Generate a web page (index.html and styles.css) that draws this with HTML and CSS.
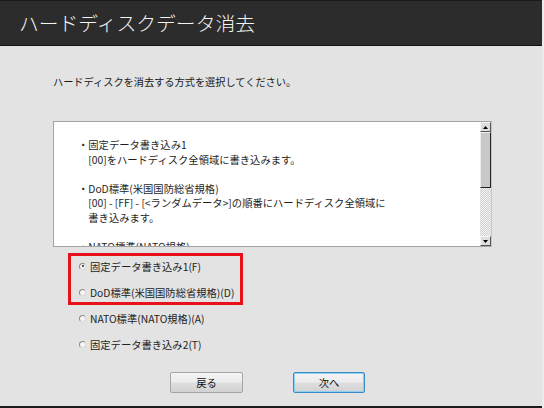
FILE: index.html
```html
<!DOCTYPE html>
<html lang="ja">
<head>
<meta charset="utf-8">
<title>ハードディスクデータ消去</title>
<link rel="stylesheet" href="styles.css">
</head>
<body>
<div class="window">
  <header class="titlebar"><h1 class="title">ハードディスクデータ消去</h1></header>
  <main class="content">
    <p class="lead">ハードディスクを消去する方式を選択してください。</p>
    <div class="listbox">
      <div class="listtext">
        <p class="item">・固定データ書き込み1<br>[00]をハードディスク全領域に書き込みます。</p>
        <p class="item">・DoD標準(米国国防総省規格)<br>[00] - [FF] - [&lt;ランダムデータ&gt;]の順番にハードディスク全領域に<br>書き込みます。</p>
        <p class="item">・NATO標準(NATO規格)</p>
      </div>
      <div class="scrollbar">
        <div class="sb-btn"><svg width="5" height="3" viewBox="0 0 5 3"><path d="M2.5 0L5 3H0z" fill="#000"/></svg></div>
        <div class="sb-thumb"></div>
        <div class="sb-track"></div>
        <div class="sb-btn"><svg width="5" height="3" viewBox="0 0 5 3"><path d="M0 0H5L2.5 3z" fill="#000"/></svg></div>
      </div>
    </div>
    <div class="options">
      <div class="highlight">
        <label class="opt"><span class="radio checked"></span>固定データ書き込み1(F)</label>
        <label class="opt"><span class="radio"></span>DoD標準(米国国防総省規格)(D)</label>
      </div>
      <label class="opt"><span class="radio"></span>NATO標準(NATO規格)(A)</label>
      <label class="opt"><span class="radio"></span>固定データ書き込み2(T)</label>
    </div>
    <div class="buttons">
      <button class="btn back">戻る</button>
      <button class="btn next">次へ</button>
    </div>
  </main>
</div>
</body>
</html>
```

FILE: styles.css
```css
html, body {
  margin: 0;
  padding: 0;
  background: #ececec;
}
body {
  font-family: "Noto Sans CJK JP", "Noto Sans", sans-serif;
  color: #1e1e1e;
}
.window {
  width: 542px;
  height: 408px;
  box-sizing: border-box;
  background: #e3e3e3;
  border-bottom: 2px solid #1c1c1c;
  overflow: hidden;
}
.titlebar {
  height: 46px;
  box-sizing: border-box;
  background: #2c2c2c;
  border-top: 1px solid #1a1a1a;
  border-bottom: 1px solid #111;
  padding-left: 19px;
}
.title {
  margin: 0;
  font-size: 19.8px;
  font-weight: 300;
  line-height: 44px;
  color: #f4f4f4;
  letter-spacing: 0;
}
.content {
  padding-left: 53px;
}
.lead {
  margin: 29px 0 0;
  font-size: 10.2px;
  line-height: 14px;
  color: #1a1a1a;
  white-space: nowrap;
}
.listbox {
  margin-top: 32px;
  width: 439px;
  height: 126px;
  box-sizing: border-box;
  border: 1px solid #a3a3a3;
  border-right-color: #c8c8c8;
  background: #fff;
  display: flex;
}
.listtext {
  flex: 1;
  overflow: hidden;
  padding: 16px 0 0 24px;
  font-size: 10.3px;
  line-height: 14.5px;
  white-space: nowrap;
}
.item {
  margin: 0 0 14.5px;
  padding-left: 1em;
  text-indent: -1em;
}
.scrollbar {
  width: 11px;
  display: flex;
  flex-direction: column;
}
.sb-btn {
  height: 10px;
  box-sizing: border-box;
  background: #dedede;
  border: 1px solid #f4f4f4;
  border-right-color: #555;
  border-bottom-color: #555;
  display: flex;
  align-items: center;
  justify-content: center;
}
.sb-thumb {
  height: 56px;
  box-sizing: border-box;
  background: #c9c9c9;
  border: 1px solid #eeeeee;
  border-right-color: #222;
  border-bottom-color: #222;
}
.sb-track {
  flex: 1;
  background: repeating-conic-gradient(#d2d2d2 0 25%, #f2f2f2 0 50%) 0 0 / 2px 2px;
}
.options {
  margin: 6px 0 0 15px;
}
.highlight {
  width: 175px;
  outline: 3px solid #e8101a;
  outline-offset: -3px;
}
.opt {
  display: flex;
  align-items: center;
  gap: 4px;
  height: 26px;
  padding-left: 11px;
  font-size: 10.3px;
  color: #222;
  white-space: nowrap;
}
.radio {
  width: 7px;
  height: 7px;
  box-sizing: border-box;
  border-radius: 50%;
  border: 1px solid #8a8a8a;
  border-right-color: #d8d8d8;
  border-bottom-color: #d8d8d8;
  background: #f6f6f6;
  position: relative;
  flex: none;
}
.radio.checked::after {
  content: "";
  position: absolute;
  left: 1.5px;
  top: 1.5px;
  width: 2px;
  height: 2px;
  border-radius: 50%;
  background: #222;
}
.buttons {
  margin-top: 15px;
  padding-left: 117px;
  display: flex;
  gap: 50px;
}
.btn {
  width: 73px;
  height: 21px;
  box-sizing: border-box;
  border: 1px solid #a5a5a5;
  border-radius: 2px;
  background: linear-gradient(#f4f4f4 0%, #ececec 48%, #dedede 52%, #d2d2d2 100%);
  font-family: "Noto Sans CJK JP", "Noto Sans", sans-serif;
  font-size: 10.3px;
  color: #111;
  padding: 0;
  line-height: 19px;
}
.btn.next {
  width: 72px;
  border-color: #3a8cc6;
  box-shadow: inset 0 0 0 1px #8fd0f2;
}
```
